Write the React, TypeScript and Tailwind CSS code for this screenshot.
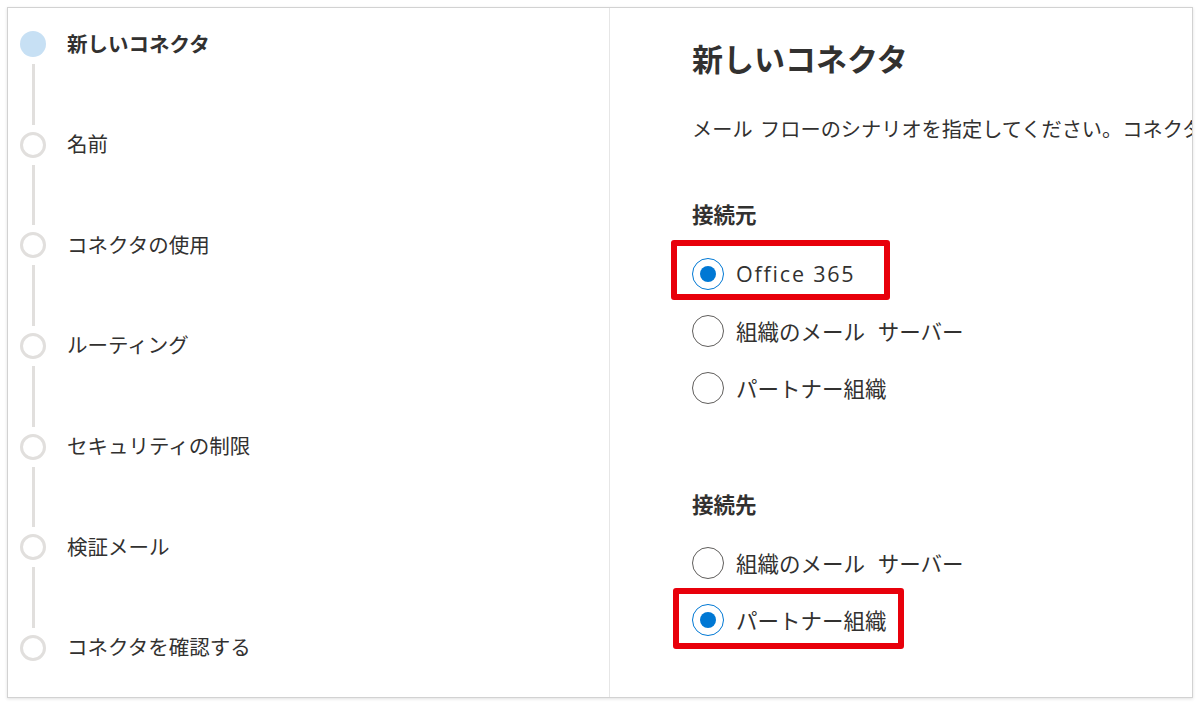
import React from "react";

const FONT = { fontFamily: '"Noto Sans CJK JP", "Noto Sans", sans-serif' };
const LATIN = { fontFamily: '"Open Sans", "Noto Sans CJK JP", sans-serif' };

const steps = [
  "新しいコネクタ",
  "名前",
  "コネクタの使用",
  "ルーティング",
  "セキュリティの制限",
  "検証メール",
  "コネクタを確認する",
];

function Radio({ checked, label, latin }: { checked?: boolean; label: string; latin?: boolean }) {
  return (
    <div className="flex h-[57px] items-center">
      {checked ? (
        <div className="flex h-[32px] w-[32px] items-center justify-center rounded-full border-[1.5px] border-[#0078d4] bg-white">
          <div className="h-[16px] w-[16px] rounded-full bg-[#0078d4]" />
        </div>
      ) : (
        <div className="h-[32px] w-[32px] rounded-full border-[1.5px] border-[#605e5c] bg-white" />
      )}
      <span
        className={`ml-[12px] text-[21.5px] leading-[30px] text-[#323130] ${latin ? "tracking-[1.8px]" : "[word-spacing:8px]"}`}
        style={latin ? LATIN : FONT}
      >
        {label}
      </span>
    </div>
  );
}

export default function App() {
  return (
    <div className="h-[705px] w-[1200px] overflow-hidden bg-white pl-[7px] pt-[7px]" style={FONT}>
      <div className="flex h-[691px] w-[1186px] overflow-hidden border border-[#d2d2d2] bg-white shadow-[0_1px_3px_rgba(0,0,0,0.12)]">
        {/* left steps */}
        <div className="w-[602px] shrink-0 border-r border-[#e6e6e6] pl-[12px] pt-[23px]">
          {steps.map((s, i) => (
            <div key={s}>
              <div className="flex h-[26px] items-center">
                {i === 0 ? (
                  <div className="h-[26px] w-[26px] rounded-full bg-[#c7e0f4]" />
                ) : (
                  <div className="h-[26px] w-[26px] rounded-full border-[3px] border-[#e1dfdd]" />
                )}
                <span
                  className={`ml-[21px] pb-[3px] text-[20.5px] leading-[28px] text-[#323130] ${i === 0 ? "font-bold" : ""}`}
                >
                  {s}
                </span>
              </div>
              {i < steps.length - 1 && (
                <div className="flex h-[74.67px] w-[26px] justify-center py-[7px]">
                  <div className="h-full w-[3px] bg-[#e1dfdd]" />
                </div>
              )}
            </div>
          ))}
        </div>

        {/* right content */}
        <div className="relative min-w-0 flex-1 overflow-hidden pl-[82px] pt-[30px]">
          <h1 className="whitespace-nowrap text-[31px] font-bold leading-[40px] text-[#323130]">
            新しいコネクタ
          </h1>
          <p className="mt-[37px] whitespace-nowrap text-[20.2px] leading-[28px] text-[#323130] [word-spacing:3px]">
            メール フローのシナリオを指定してください。コネクタを作成すると、メール フローの設定が適用されます。
          </p>
          <div className="mt-[57px] text-[21.5px] font-bold leading-[28px] text-[#323130]">接続元</div>
          <div className="mt-[17.5px]">
            <div className="relative">
              <Radio checked label="Office 365" latin />
              <div className="absolute left-[-21px] top-[-5.5px] h-[60px] w-[219px] rounded-[3px] border-[6px] border-[#e8000b]" />
            </div>
            <Radio label="組織のメール サーバー" />
            <Radio label="パートナー組織" />
          </div>
          <div className="mt-[73.5px] text-[21.5px] font-bold leading-[28px] text-[#323130]">接続先</div>
          <div className="mt-[16.5px]">
            <Radio label="組織のメール サーバー" />
            <div className="relative">
              <Radio checked label="パートナー組織" />
              <div className="absolute left-[-19px] top-[-3.5px] h-[61px] w-[231px] rounded-[3px] border-[6px] border-[#e8000b]" />
            </div>
          </div>
        </div>
      </div>
    </div>
  );
}
